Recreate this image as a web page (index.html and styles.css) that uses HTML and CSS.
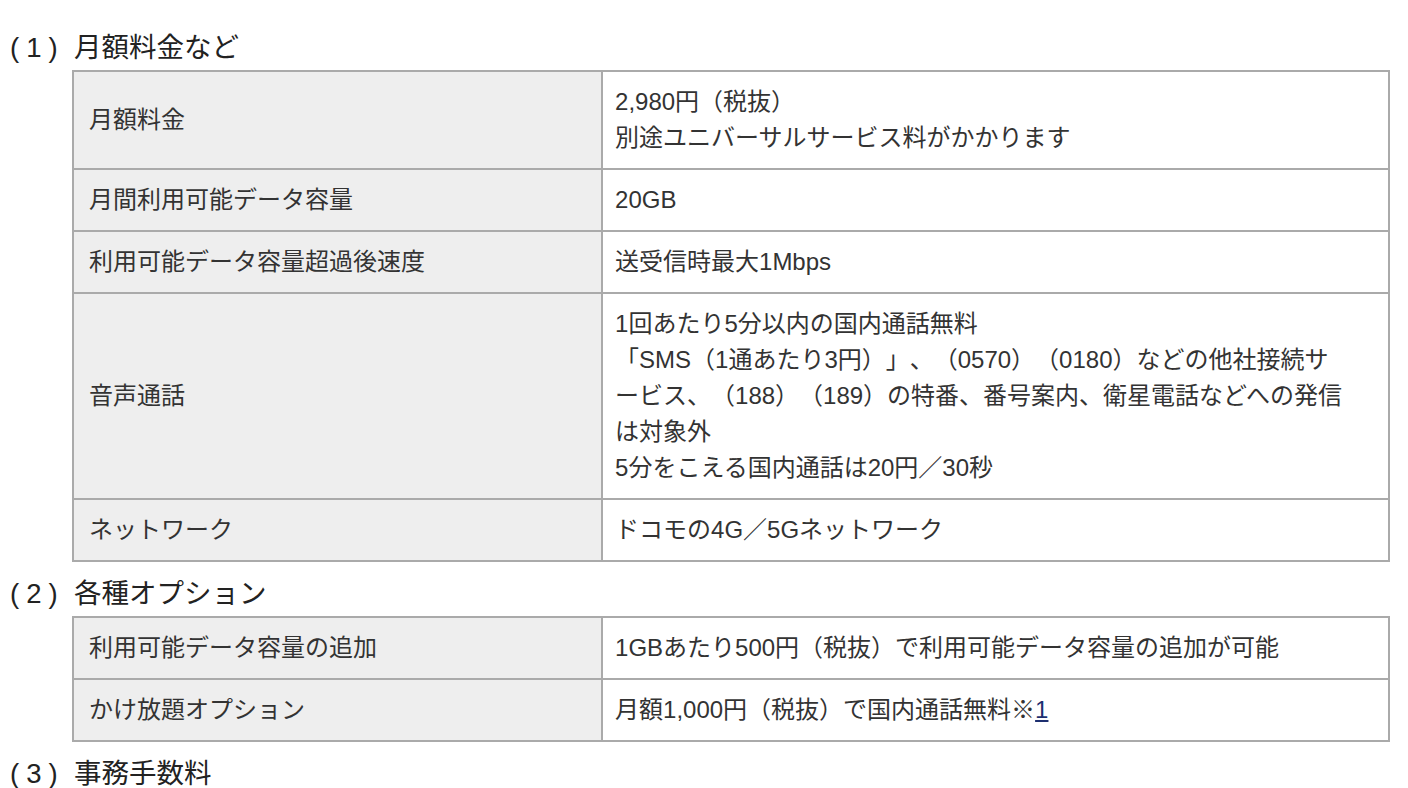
FILE: index.html
```html
<!DOCTYPE html>
<html lang="ja">
<head>
<meta charset="utf-8">
<title>料金</title>
<link rel="stylesheet" href="styles.css">
</head>
<body>
<div class="page">
  <h2 class="sec-title"><span class="num">(1)</span><span class="txt">月額料金など</span></h2>
  <table class="spec">
    <colgroup><col class="col-head"><col class="col-body"></colgroup>
    <tbody>
      <tr><th>月額料金</th><td>2,980円（税抜）<br>別途ユニバーサルサービス料がかかります</td></tr>
      <tr><th>月間利用可能データ容量</th><td>20GB</td></tr>
      <tr><th>利用可能データ容量超過後速度</th><td>送受信時最大1Mbps</td></tr>
      <tr><th>音声通話</th><td>1回あたり5分以内の国内通話無料<br>「SMS（1通あたり3円）」、（0570）（0180）などの他社接続サービス、（188）（189）の特番、番号案内、衛星電話などへの発信は対象外<br>5分をこえる国内通話は20円／30秒</td></tr>
      <tr><th>ネットワーク</th><td>ドコモの4G／5Gネットワーク</td></tr>
    </tbody>
  </table>
  <h2 class="sec-title"><span class="num">(2)</span><span class="txt">各種オプション</span></h2>
  <table class="spec">
    <colgroup><col class="col-head"><col class="col-body"></colgroup>
    <tbody>
      <tr><th>利用可能データ容量の追加</th><td>1GBあたり500円（税抜）で利用可能データ容量の追加が可能</td></tr>
      <tr><th>かけ放題オプション</th><td>月額1,000円（税抜）で国内通話無料※<a href="#note1" class="note">1</a></td></tr>
    </tbody>
  </table>
  <h2 class="sec-title"><span class="num">(3)</span><span class="txt">事務手数料</span></h2>
</div>
</body>
</html>
```

FILE: styles.css
```css
html, body {
  margin: 0;
  padding: 0;
  background: #ffffff;
}
body {
  font-family: "Liberation Sans", "Noto Sans CJK JP", sans-serif;
  color: #333333;
  font-size: 24px;
  line-height: 1.5;
  text-spacing-trim: space-all;
  line-break: loose;
}
.page {
  padding: 16px 18px 0 8px;
}
.sec-title {
  display: flex;
  align-items: baseline;
  margin: 12px 0 2px;
  font-size: 27.5px;
  font-weight: normal;
  line-height: 40px;
  color: #222222;
}
.sec-title .num {
  width: 64px;
  flex: none;
  letter-spacing: 7px;
  padding-left: 2px;
}
.spec {
  margin-left: 64px;
  width: calc(100% - 64px);
  border-collapse: collapse;
  table-layout: fixed;
  border: 2px solid #aaaaaa;
}
.spec .col-head {
  width: 40.2%;
}
.spec th,
.spec td {
  border: 2px solid #aaaaaa;
  padding: 12px 14px;
  text-align: left;
  vertical-align: middle;
  font-weight: normal;
}
.spec th {
  background: #eeeeee;
  padding-left: 15px;
}
.spec td {
  background: #ffffff;
  padding-left: 12px;
  padding-right: 44px;
}
.note {
  color: #1d2f6f;
  text-decoration: underline;
}
```
